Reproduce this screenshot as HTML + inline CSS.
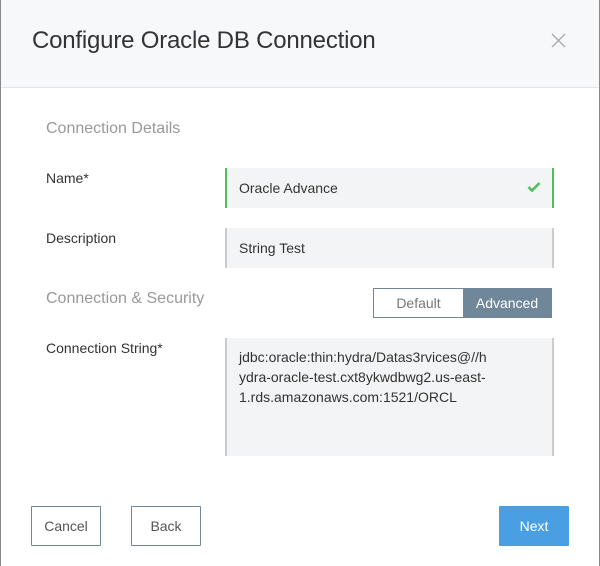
<!DOCTYPE html>
<html><head><style>
*{box-sizing:border-box;margin:0;padding:0}
body{width:600px;height:566px;background:#fff;font-family:"Liberation Sans",sans-serif;position:relative;overflow:hidden}
.a{position:absolute}
.hdr{left:0;top:0;width:600px;height:88px;background:#f7f8fa;border-bottom:1px solid #e3e4e6}
.lbl{font-size:14px;color:#333}
.sec{font-size:16px;color:#999}
.inp{background:#f3f4f5;font-size:14px;color:#333;padding-left:12px}
.btn{border:1px solid #6f8799;font-size:14px;color:#555;text-align:center;line-height:38px;height:40px;border-radius:1px}
</style></head><body>
<div class="a hdr"></div>
<div class="a" style="left:0;top:0;width:1px;height:566px;background:#8a8a8a"></div>
<div class="a" style="right:0;top:0;width:1px;height:566px;background:#8a8a8a"></div>
<div class="a" style="left:32px;top:27px;font-size:24px;color:#333;letter-spacing:-0.2px">Configure Oracle DB Connection</div>
<svg class="a" style="left:551px;top:33px" width="15" height="15"><path d="M1 1L14 14M14 1L1 14" stroke="#aaa" stroke-width="1.3"/></svg>
<div class="a sec" style="left:46px;top:120px">Connection Details</div>
<div class="a lbl" style="left:46px;top:170px">Name*</div>
<div class="a inp" style="left:225px;top:168px;width:329px;height:40px;line-height:40px;border-left:2px solid #4cbf5c;border-right:2px solid #4cbf5c">Oracle Advance</div>
<svg class="a" style="left:527px;top:181px" width="14" height="12"><path d="M1.5 6L5 9.5L12.5 2" stroke="#4cbf5c" stroke-width="2.6" fill="none"/></svg>
<div class="a lbl" style="left:46px;top:230px">Description</div>
<div class="a inp" style="left:225px;top:228px;width:329px;height:40px;line-height:40px;border-left:2px solid #ccc;border-right:2px solid #ccc">String Test</div>
<div class="a sec" style="left:46px;top:290px">Connection &amp; Security</div>
<div class="a" style="left:373px;top:288px;width:179px;height:30px;border:1px solid #6f8799;display:flex;font-size:14px">
<div style="width:89px;text-align:center;line-height:28px;color:#777">Default</div>
<div style="flex:1;background:#6f8799;color:#fff;text-align:center;line-height:28px">Advanced</div></div>
<div class="a lbl" style="left:46px;top:340px">Connection String*</div>
<div class="a inp" style="left:225px;top:338px;width:329px;height:118px;border-left:2px solid #ccc;border-right:2px solid #ccc;padding-top:9px;line-height:20px">jdbc:oracle:thin:hydra/Datas3rvices@//h<br>ydra-oracle-test.cxt8ykwdbwg2.us-east-<br>1.rds.amazonaws.com:1521/ORCL</div>
<div class="a btn" style="left:31px;top:506px;width:70px">Cancel</div>
<div class="a btn" style="left:131px;top:506px;width:70px">Back</div>
<div class="a btn" style="left:499px;top:506px;width:70px;background:#4a9fe3;border-color:#4a9fe3;color:#fff">Next</div>
</body></html>
